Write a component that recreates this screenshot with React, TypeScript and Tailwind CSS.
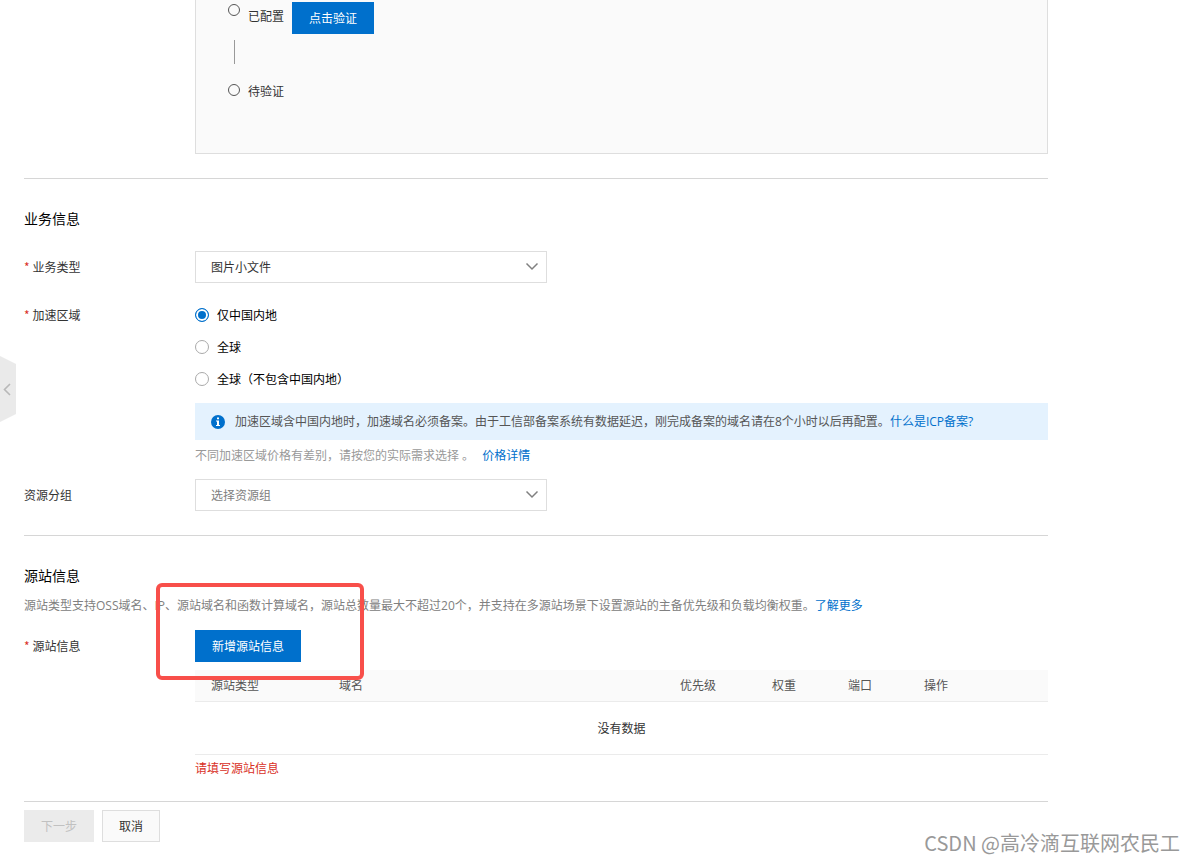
import type { ReactNode } from "react";

const regions = ["仅中国内地", "全球", "全球（不包含中国内地）"];

function Step({ label, line, children }: { label: string; line?: boolean; children?: ReactNode }) {
    return (
        <li className={line ? "flex gap-2 h-20" : "flex gap-2"}>
            <div className="w-3 pt-1 flex flex-col items-center gap-6">
                <span className="size-3 rounded-full border border-[#555]" />
                {line && <span className="w-px h-6 bg-[#999]" />}
            </div>
            <span className={line ? "leading-8" : "leading-[22px]"}>{label}</span>
            {children}
        </li>
    );
}

function Required() {
    return <span className="text-[#d93026] mr-[3px]">*</span>;
}

function Select({ id, options, muted }: { id: string; options: string[]; muted?: boolean }) {
    return (
        <div className="relative w-88">
            <select
                id={id}
                className={
                    muted
                        ? "appearance-none block w-full h-8 px-[15px] border border-[#dedede] bg-white text-[#808080]"
                        : "appearance-none block w-full h-8 px-[15px] border border-[#dedede] bg-white text-[#333]"
                }
            >
                {options.map((o) => (
                    <option key={o}>{o}</option>
                ))}
            </select>
            <svg
                className="absolute right-2 top-2 size-3.5 pointer-events-none"
                viewBox="0 0 14 14"
                fill="none"
                stroke="#808080"
                strokeWidth="1.5"
            >
                <path d="M1.500 4.500 7 10l5.500-5.500" />
            </svg>
        </div>
    );
}

export default function App() {
    return (
        <div className="relative min-h-screen overflow-hidden bg-white pl-6 pr-[147px] pb-5 text-xs leading-5 text-[#333] font-['Noto_Sans_CJK_SC',sans-serif]">
            <button aria-label="收起" className="absolute left-0 top-[356px]">
                <svg width="16" height="66" viewBox="0 0 16 66" fill="none">
                    <path d="M0 0 16 8v50L0 66z" fill="#eaeaea" />
                    <path d="M10 28 4.5 33.5 10 39" stroke="#b8b8b8" strokeWidth="1.6" />
                </svg>
            </button>

            <div className="ml-[171px] h-[154px] border border-t-0 border-[#dedede] bg-[#fafafa] pl-8">
                <ol>
                    <Step label="已配置" line>
                        <button className="mt-0.5 h-8 px-[17px] bg-[#0070cc] text-white">点击验证</button>
                    </Step>
                    <Step label="待验证" />
                </ol>
            </div>

            <section className="mt-6 border-t border-[#d6d6d6] pt-[30px]">
                <h2 className="text-sm leading-5 text-black font-['Open_Sans','Noto_Sans_CJK_SC',sans-serif]">业务信息</h2>
                <div className="mt-[22px] flex">
                    <label htmlFor="biz" className="w-[171px] shrink-0 leading-8">
                        <Required />业务类型
                    </label>
                    <Select id="biz" options={["图片小文件"]} />
                </div>
                <div className="mt-4 flex">
                    <span id="region" className="w-[171px] shrink-0 leading-8">
                        <Required />加速区域
                    </span>
                    <div className="grow">
                        <div role="radiogroup" aria-labelledby="region">
                            {regions.map((r, i) => (
                                <label key={r} className="flex items-center gap-2 h-8 w-fit text-black">
                                    <input
                                        type="radio"
                                        name="region"
                                        defaultChecked={i === 0}
                                        className="appearance-none size-3.5 rounded-full border border-[#aaa] bg-white checked:border-[#0070cc] checked:bg-[#0070cc] checked:shadow-[inset_0_0_0_2px_white]"
                                    />
                                    {r}
                                </label>
                            ))}
                        </div>
                        <div className="mt-2 flex items-center gap-2.5 h-[37px] px-4 bg-[#e4f2fe] text-[#555] font-['Open_Sans','Noto_Sans_CJK_SC',sans-serif]">
                            <svg className="size-3.5 shrink-0" viewBox="0 0 14 14">
                                <circle cx="7" cy="7" r="7" fill="#0070cc" />
                                <path d="M6 2.500h2v1.800H6zM5 5.500h3v4.400h1V11H5V9.900h1V6.600H5z" fill="#fff" />
                            </svg>
                            <p>
                                加速区域含中国内地时，加速域名必须备案。由于工信部备案系统有数据延迟，刚完成备案的域名请在8个小时以后再配置。
                                <a href="#" className="text-[#0070cc]">什么是ICP备案?</a>
                            </p>
                        </div>
                        <p className="mt-1.5 text-[#999] font-['Open_Sans','Noto_Sans_CJK_SC',sans-serif]">
                            不同加速区域价格有差别，请按您的实际需求选择 。
                            <a href="#" className="ml-2 text-[#0070cc]">价格详情</a>
                        </p>
                    </div>
                </div>
                <div className="mt-[13px] flex">
                    <label htmlFor="group" className="w-[171px] shrink-0 leading-8">资源分组</label>
                    <Select id="group" options={["选择资源组"]} muted />
                </div>
            </section>

            <section className="mt-6 border-t border-[#d6d6d6] pt-[30px]">
                <h2 className="text-sm leading-5 text-black font-['Open_Sans','Noto_Sans_CJK_SC',sans-serif]">源站信息</h2>
                <p className="mt-2.5 text-[#808080] font-['Open_Sans','Noto_Sans_CJK_SC',sans-serif]">
                    源站类型支持OSS域名、IP、源站域名和函数计算域名，源站总数量最大不超过20个，并支持在多源站场景下设置源站的主备优先级和负载均衡权重。
                    <a href="#" className="text-[#0070cc]">了解更多</a>
                </p>
                <div className="mt-3.5 flex">
                    <span className="w-[171px] shrink-0 leading-8">
                        <Required />源站信息
                    </span>
                    <div className="relative grow">
                        <button className="block h-8 px-[17px] bg-[#0070cc] text-white">新增源站信息</button>
                        <div className="absolute -left-[39px] -top-[47px] w-52 h-[97px] rounded-md border-4 border-[#f84f4a] pointer-events-none" />
                        <table className="mt-2 w-full table-fixed">
                            <thead>
                                <tr className="h-[31px] border-b border-[#ebebeb] bg-[#fafafa] text-left text-[#555]">
                                    <th className="w-32 pl-4 font-normal">源站类型</th>
                                    <th className="pl-4 font-normal">域名</th>
                                    <th className="w-[92px] pl-4 font-normal">优先级</th>
                                    <th className="w-[76px] pl-4 font-normal">权重</th>
                                    <th className="w-[76px] pl-4 font-normal">端口</th>
                                    <th className="w-[140px] pl-4 font-normal">操作</th>
                                </tr>
                            </thead>
                            <tbody>
                                <tr className="h-[53px] border-b border-[#ebebeb]">
                                    <td colSpan={6} className="text-center">没有数据</td>
                                </tr>
                            </tbody>
                        </table>
                        <p className="mt-1 text-[#d93026] font-['Open_Sans','Noto_Sans_CJK_SC',sans-serif]">请填写源站信息</p>
                    </div>
                </div>
            </section>

            <footer className="mt-[22px] border-t border-[#d6d6d6] pt-2 flex gap-2">
                <button disabled className="h-8 px-[17px] bg-[#ebebeb] text-[#c1c1c1]">下一步</button>
                <button className="h-8 px-4 border border-[#dedede] bg-[#fafafa]">取消</button>
            </footer>

            <div className="absolute right-[15px] bottom-[5px] text-xl leading-7 text-[#999] font-['Noto_Sans_CJK_SC',sans-serif]">
                CSDN @高冷滴互联网农民工
            </div>
        </div>
    );
}
